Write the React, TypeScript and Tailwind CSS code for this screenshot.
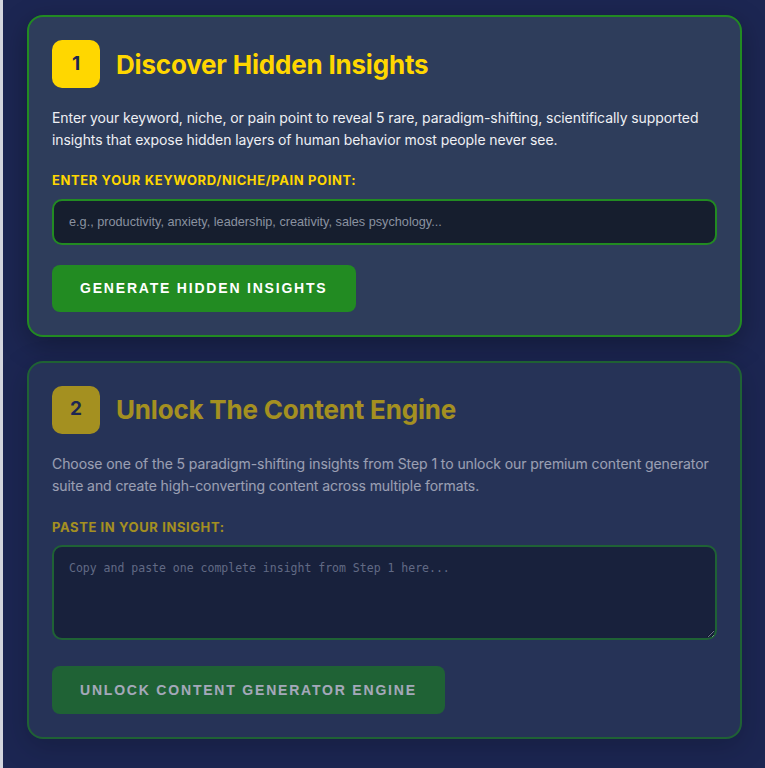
import type { ReactNode } from "react";

const inter = { fontFamily: "Inter, 'Noto Sans', sans-serif" };
const arial = { fontFamily: "'Liberation Sans', Arial, sans-serif" };

function StepCard({
  step,
  title,
  description,
  children,
  locked = false,
}: {
  step: number;
  title: string;
  description: string;
  children: ReactNode;
  locked?: boolean;
}) {
  return (
    <section
      className={`rounded-2xl border-2 border-[#228b22] bg-[#2e3d5b] p-[23px] shadow-[0_8px_28px_rgba(0,0,0,0.3)] ${
        locked ? "opacity-60" : ""
      }`}
    >
      <div className="flex items-center gap-4">
        <div className="flex h-12 w-12 items-center justify-center rounded-[10px] bg-[#ffd700] text-[19px] font-bold text-[#1c2652]">
          {step}
        </div>
        <h2 className="text-[26px] font-bold tracking-[-0.2px] text-[#ffd700]">{title}</h2>
      </div>
      <p className="mt-[19px] text-[14px] leading-[22px] tracking-[-0.08px] text-[#eef0f4]">{description}</p>
      {children}
    </section>
  );
}

export default function App() {
  return (
    <div className="flex min-h-[768px] bg-[#d4d6de]" style={inter}>
      <div className="ml-[3px] flex-1 bg-[#1c2652] pl-6 pt-[15px] pb-7">
        <div className="flex w-[715px] flex-col gap-6">
          {/* Step 1: keyword input */}
          <StepCard
            step={1}
            title="Discover Hidden Insights"
            description="Enter your keyword, niche, or pain point to reveal 5 rare, paradigm-shifting, scientifically supported insights that expose hidden layers of human behavior most people never see."
          >
            <label className="mt-5 block text-[13px] font-bold uppercase tracking-[0.6px] text-[#ffd700]">
              Enter your keyword/niche/pain point:
            </label>
            <input
              type="text"
              placeholder="e.g., productivity, anxiety, leadership, creativity, sales psychology..."
              className="mt-2 block h-[46px] w-full rounded-[10px] border-2 border-[#228b22] bg-[#161e2e] px-[15px] text-[12.7px] text-white outline-none placeholder:text-[#8a92a0]"
              style={arial}
            />
            <button
              className="mt-5 block h-[47px] rounded-lg bg-[#228b22] px-7 text-[14px] font-bold uppercase tracking-[1.8px] text-white"
              style={arial}
            >
              Generate Hidden Insights
            </button>
          </StepCard>

          <StepCard
            step={2}
            title="Unlock The Content Engine"
            description="Choose one of the 5 paradigm-shifting insights from Step 1 to unlock our premium content generator suite and create high-converting content across multiple formats."
            locked
          >
            <label className="mt-[21px] block text-[13px] font-bold uppercase tracking-[0.6px] text-[#ffd700]">
              Paste in your insight:
            </label>
            <textarea
              placeholder="Copy and paste one complete insight from Step 1 here..."
              className="mt-2 block h-[95px] w-full resize-y rounded-[10px] border-2 border-[#228b22] bg-[#161e2e] px-[15px] py-[13px] text-[11.5px] text-white outline-none placeholder:text-[#9098a6]"
              style={{ fontFamily: "'DejaVu Sans Mono', 'Liberation Mono', monospace" }}
            />
            <button
              disabled
              className="mt-[26px] block h-[48px] rounded-lg bg-[#228b22] px-7 text-[14px] font-bold uppercase tracking-[1.8px] text-white"
              style={arial}
            >
              Unlock Content Generator Engine
            </button>
          </StepCard>
        </div>
      </div>
    </div>
  );
}
